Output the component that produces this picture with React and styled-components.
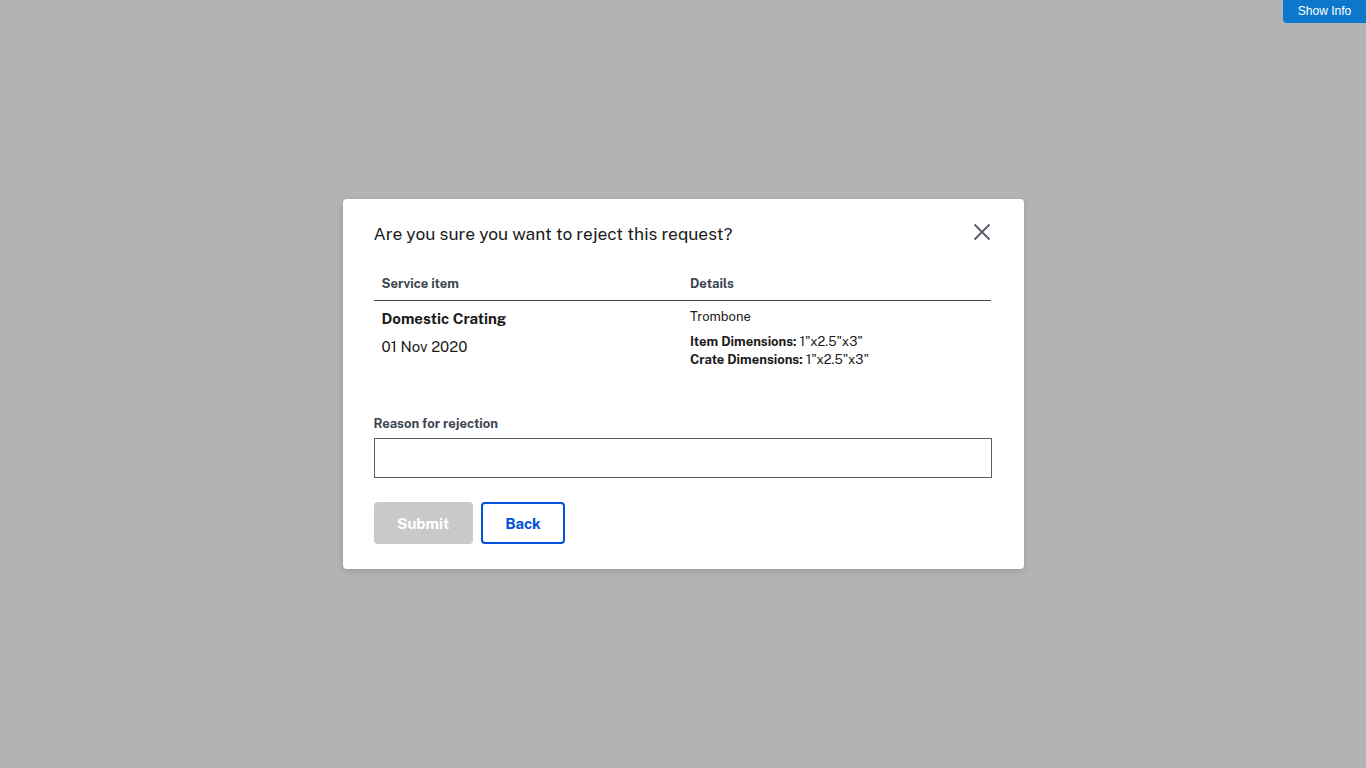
import React from "react";
import styled, { createGlobalStyle } from "styled-components";

const Global = createGlobalStyle`
  html, body { margin: 0; padding: 0; height: 100%; }
  body { background: #b3b3b3; font-family: "Public Sans", Roboto, "Liberation Sans", sans-serif; color: #1b1b1b; }
  #root { min-height: 100vh; }
`;

const Page = styled.div`
  position: relative;
  min-height: 100vh;
  display: flex;
  justify-content: center;
  align-items: flex-start;
  padding-top: 199px;
  box-sizing: border-box;
`;

const ShowInfo = styled.button`
  position: absolute;
  top: 0;
  right: 0;
  width: 83px;
  height: 23px;
  border: none;
  border-radius: 0 0 0 4px;
  background: #0b78cc;
  color: #fff;
  font-family: "Liberation Sans", Arial, sans-serif;
  font-size: 12px;
  padding: 0 0 1px;
  cursor: pointer;
`;

const Modal = styled.div`
  width: 681px;
  box-sizing: border-box;
  background: #fff;
  border-radius: 4px;
  box-shadow: 0 2px 6px rgba(0, 0, 0, 0.15);
  padding: 22px 32px 25px 31px;
  position: relative;
`;

const Header = styled.div`
  display: flex;
  justify-content: space-between;
  align-items: flex-start;
`;

const Title = styled.h2`
  margin: 0;
  font-size: 17.4px;
  font-weight: 400;
  line-height: 26px;
  color: #1b1b1b;
`;

const Close = styled.button`
  border: none;
  background: none;
  padding: 0;
  margin: 0 -1px 0 0;
  width: 22px;
  height: 22px;
  display: flex;
  align-items: center;
  justify-content: center;
  color: #565c65;
  cursor: pointer;
`;

const Table = styled.table`
  width: 617px;
  border-collapse: collapse;
  margin-top: 29px;
  table-layout: fixed;
`;

const Th = styled.th`
  text-align: left;
  font-size: 13px;
  font-weight: 700;
  color: #3d4551;
  padding: 0 8px 8px;
  line-height: 16px;
  border-bottom: 1px solid #3d4551;
`;

const Td = styled.td`
  vertical-align: top;
  padding: 7px 8px 0;
`;

const ItemName = styled.div`
  font-size: 15px;
  font-weight: 700;
  line-height: 20px;
  margin-top: 1px;
`;

const ItemDate = styled.div`
  font-size: 15px;
  line-height: 20px;
  margin-top: 8px;
`;

const DetailText = styled.div`
  font-size: 13px;
  line-height: 18px;
  margin-top: ${(p) => p.$gap || 0}px;
  b { font-weight: 700; }
`;

const Label = styled.label`
  display: block;
  margin-top: 47px;
  font-size: 13px;
  font-weight: 700;
  color: #3d4551;
  line-height: 16px;
`;

const Input = styled.input`
  display: block;
  width: 618px;
  height: 40px;
  box-sizing: border-box;
  margin-top: 6px;
  border: 1px solid #565c65;
  border-radius: 0;
  padding: 0 8px;
  font-size: 15px;
  outline: none;
`;

const Buttons = styled.div`
  display: flex;
  gap: 8px;
  margin-top: 24px;
`;

const Btn = styled.button`
  height: 42px;
  box-sizing: border-box;
  border-radius: 4px;
  font-family: inherit;
  font-size: 15px;
  font-weight: 700;
  padding: 0 ${(p) => (p.$outline ? 22.5 : 23.5)}px;
  background: ${(p) => (p.$outline ? "#fff" : "#c9c9c9")};
  color: ${(p) => (p.$outline ? "#0050d8" : "#fff")};
  border: ${(p) => (p.$outline ? "2px solid #0050d8" : "none")};
  cursor: pointer;
`;

export default function App() {
  return (
    <Page>
      <Global />
      <ShowInfo>Show Info</ShowInfo>
      <Modal>
        <Header>
          <Title>Are you sure you want to reject this request?</Title>
          <Close aria-label="Close">
            <svg width="18" height="18" viewBox="0 0 18 18" fill="none" stroke="currentColor" strokeWidth="1.8">
              <path d="M1.5 1.5 L16.5 16.5 M16.5 1.5 L1.5 16.5" />
            </svg>
          </Close>
        </Header>
        <Table>
          <thead>
            <tr>
              <Th>Service item</Th>
              <Th>Details</Th>
            </tr>
          </thead>
          <tbody>
            <tr>
              <Td>
                <ItemName>Domestic Crating</ItemName>
                <ItemDate>01 Nov 2020</ItemDate>
              </Td>
              <Td>
                <DetailText>Trombone</DetailText>
                <DetailText $gap={7}><b>Item Dimensions:</b> 1"x2.5"x3"</DetailText>
                <DetailText><b>Crate Dimensions:</b> 1"x2.5"x3"</DetailText>
              </Td>
            </tr>
          </tbody>
        </Table>
        <Label htmlFor="reason">Reason for rejection</Label>
        <Input id="reason" type="text" />
        <Buttons>
          <Btn disabled>Submit</Btn>
          <Btn $outline>Back</Btn>
        </Buttons>
      </Modal>
    </Page>
  );
}
